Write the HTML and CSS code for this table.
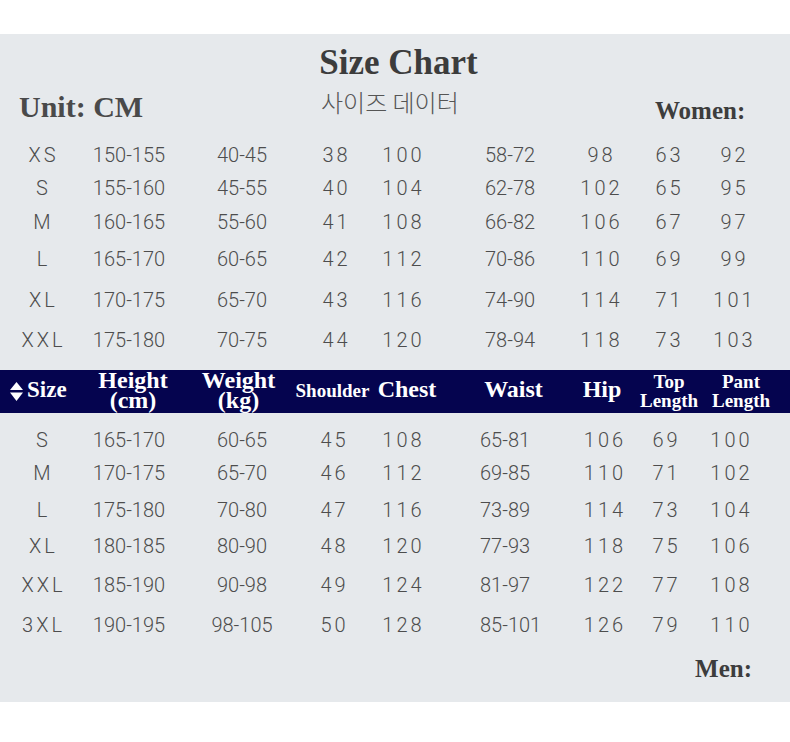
FILE: index.html
```html
<!DOCTYPE html>
<html lang="en">
<head>
<meta charset="utf-8">
<title>Size Chart</title>
<link rel="stylesheet" href="styles.css">
</head>
<body>
<div class="panel">
  <h1 class="title">Size Chart</h1>
  <div class="meta">
    <div class="unit">Unit: CM</div>
    <div class="ko">사이즈 데이터</div>
    <div class="label women-label">Women:</div>
  </div>

  <div class="sizes women">
    <span>XS</span><span>150-155</span><span>40-45</span><span>38</span><span>100</span><span>58-72</span><span>98</span><span>63</span><span>92</span>
    <span>S</span><span>155-160</span><span>45-55</span><span>40</span><span>104</span><span>62-78</span><span>102</span><span>65</span><span>95</span>
    <span>M</span><span>160-165</span><span>55-60</span><span>41</span><span>108</span><span>66-82</span><span>106</span><span>67</span><span>97</span>
    <span>L</span><span>165-170</span><span>60-65</span><span>42</span><span>112</span><span>70-86</span><span>110</span><span>69</span><span>99</span>
    <span>XL</span><span>170-175</span><span>65-70</span><span>43</span><span>116</span><span>74-90</span><span>114</span><span>71</span><span>101</span>
    <span>XXL</span><span>175-180</span><span>70-75</span><span>44</span><span>120</span><span>78-94</span><span>118</span><span>73</span><span>103</span>
  </div>

  <div class="bar">
    <div class="h-size">
      <svg class="sort" width="13" height="19" viewBox="0 0 13 19" aria-hidden="true">
        <polygon points="6.5,0 13,8 0,8" fill="#fff"/>
        <polygon points="0,10.5 13,10.5 6.5,19" fill="#fff"/>
      </svg>
      <span>Size</span>
    </div>
    <div class="h-two"><span>Height</span><span>(cm)</span></div>
    <div class="h-two"><span>Weight</span><span>(kg)</span></div>
    <div class="h-shoulder">Shoulder</div>
    <div class="h-one">Chest</div>
    <div class="h-one">Waist</div>
    <div class="h-one">Hip</div>
    <div class="h-small"><span>Top</span><span>Length</span></div>
    <div class="h-small"><span>Pant</span><span>Length</span></div>
  </div>

  <div class="sizes men">
    <span>S</span><span>165-170</span><span>60-65</span><span>45</span><span>108</span><span>65-81</span><span>106</span><span>69</span><span>100</span>
    <span>M</span><span>170-175</span><span>65-70</span><span>46</span><span>112</span><span>69-85</span><span>110</span><span>71</span><span>102</span>
    <span>L</span><span>175-180</span><span>70-80</span><span>47</span><span>116</span><span>73-89</span><span>114</span><span>73</span><span>104</span>
    <span>XL</span><span>180-185</span><span>80-90</span><span>48</span><span>120</span><span>77-93</span><span>118</span><span>75</span><span>106</span>
    <span>XXL</span><span>185-190</span><span>90-98</span><span>49</span><span>124</span><span>81-97</span><span>122</span><span>77</span><span>108</span>
    <span>3XL</span><span>190-195</span><span>98-105</span><span>50</span><span>128</span><span>85-101</span><span>126</span><span>79</span><span>110</span>
  </div>

  <div class="label men-label">Men:</div>
</div>
</body>
</html>
```

FILE: styles.css
```css
html, body {
  margin: 0;
  padding: 0;
  background: #ffffff;
}

body {
  font-family: "Liberation Serif", "Times New Roman", serif;
}

.panel {
  margin-top: 34px;
  height: 668px;
  box-sizing: border-box;
  padding-top: 8px;
  background: #e6e9ec;
}

.title {
  margin: 0;
  padding-left: 7px;
  text-align: center;
  font-size: 35px;
  line-height: 41px;
  font-weight: bold;
  color: #3c3c3c;
}

.meta {
  display: grid;
  grid-template-columns: 302px 334px auto;
  align-items: start;
  height: 40px;
  padding-left: 19px;
}

.unit {
  margin-top: 9px;
  font-size: 30px;
  line-height: 30px;
  font-weight: bold;
  color: #4a4a4a;
}

.ko {
  margin-top: 4px;
  font-family: "Noto Sans CJK KR", "Noto Sans", sans-serif;
  font-size: 24px;
  line-height: 30px;
  font-weight: 300;
  color: #555555;
}

.label {
  font-size: 25px;
  line-height: 25px;
  font-weight: bold;
  color: #3d3d3d;
}

.women-label {
  margin-top: 15px;
}

.sizes {
  display: grid;
  font-family: Roboto, "Liberation Sans", sans-serif;
  font-weight: 300;
  font-size: 20px;
  line-height: 26px;
  color: #4d4d4d;
}

.sizes > span {
  display: flex;
  justify-content: center;
  align-self: start;
  white-space: nowrap;
}

.sizes > span:nth-child(9n+1),
.sizes > span:nth-child(9n+4),
.sizes > span:nth-child(9n+5),
.sizes > span:nth-child(9n+7),
.sizes > span:nth-child(9n+8),
.sizes > span:nth-child(9n+9) {
  letter-spacing: 3px;
  padding-left: 3px;
}

.sizes > span:nth-child(9n+6) {
  justify-content: flex-start;
}

.women {
  margin-top: 19px;
  grid-template-columns: 84px 90px 136px 50px 84px 116px 80px 56px 74px;
  grid-template-rows: 33px 34px 37px 41px 40px 26px;
}

.women > span:nth-child(9n+6) {
  padding-left: 41px;
}

.men {
  margin-top: 14px;
  grid-template-columns: 84px 90px 136px 46px 92px 118px 75px 48px 82px;
  grid-template-rows: 33px 37px 36px 39px 40px 26px;
}

.men > span:nth-child(9n+6) {
  padding-left: 32px;
}

.bar {
  margin-top: 17px;
  height: 43px;
  display: grid;
  grid-template-columns: 86px 94px 117px 71px 78px 135px 42px 92px 52px;
  background: #05044f;
  color: #ffffff;
  font-weight: bold;
}

.bar > div {
  display: flex;
  flex-direction: column;
  align-items: center;
  justify-content: center;
  white-space: nowrap;
  box-sizing: border-box;
}

.bar > .h-size {
  flex-direction: row;
  align-items: center;
  justify-content: flex-start;
  gap: 4px;
  padding-left: 10px;
  padding-bottom: 3px;
  font-size: 23px;
  line-height: 24px;
}

.sort {
  display: block;
  margin-top: 3px;
}

.h-two {
  font-size: 24px;
  line-height: 20px;
  padding-bottom: 3px;
}

.h-one {
  font-size: 24px;
  line-height: 24px;
  padding-bottom: 5px;
}

.h-shoulder {
  font-size: 19px;
  line-height: 24px;
  padding-bottom: 2px;
}

.h-small {
  font-size: 19px;
  line-height: 19px;
  padding-bottom: 1px;
}

.men-label {
  margin-top: 18px;
  padding-right: 38px;
  text-align: right;
}
```
